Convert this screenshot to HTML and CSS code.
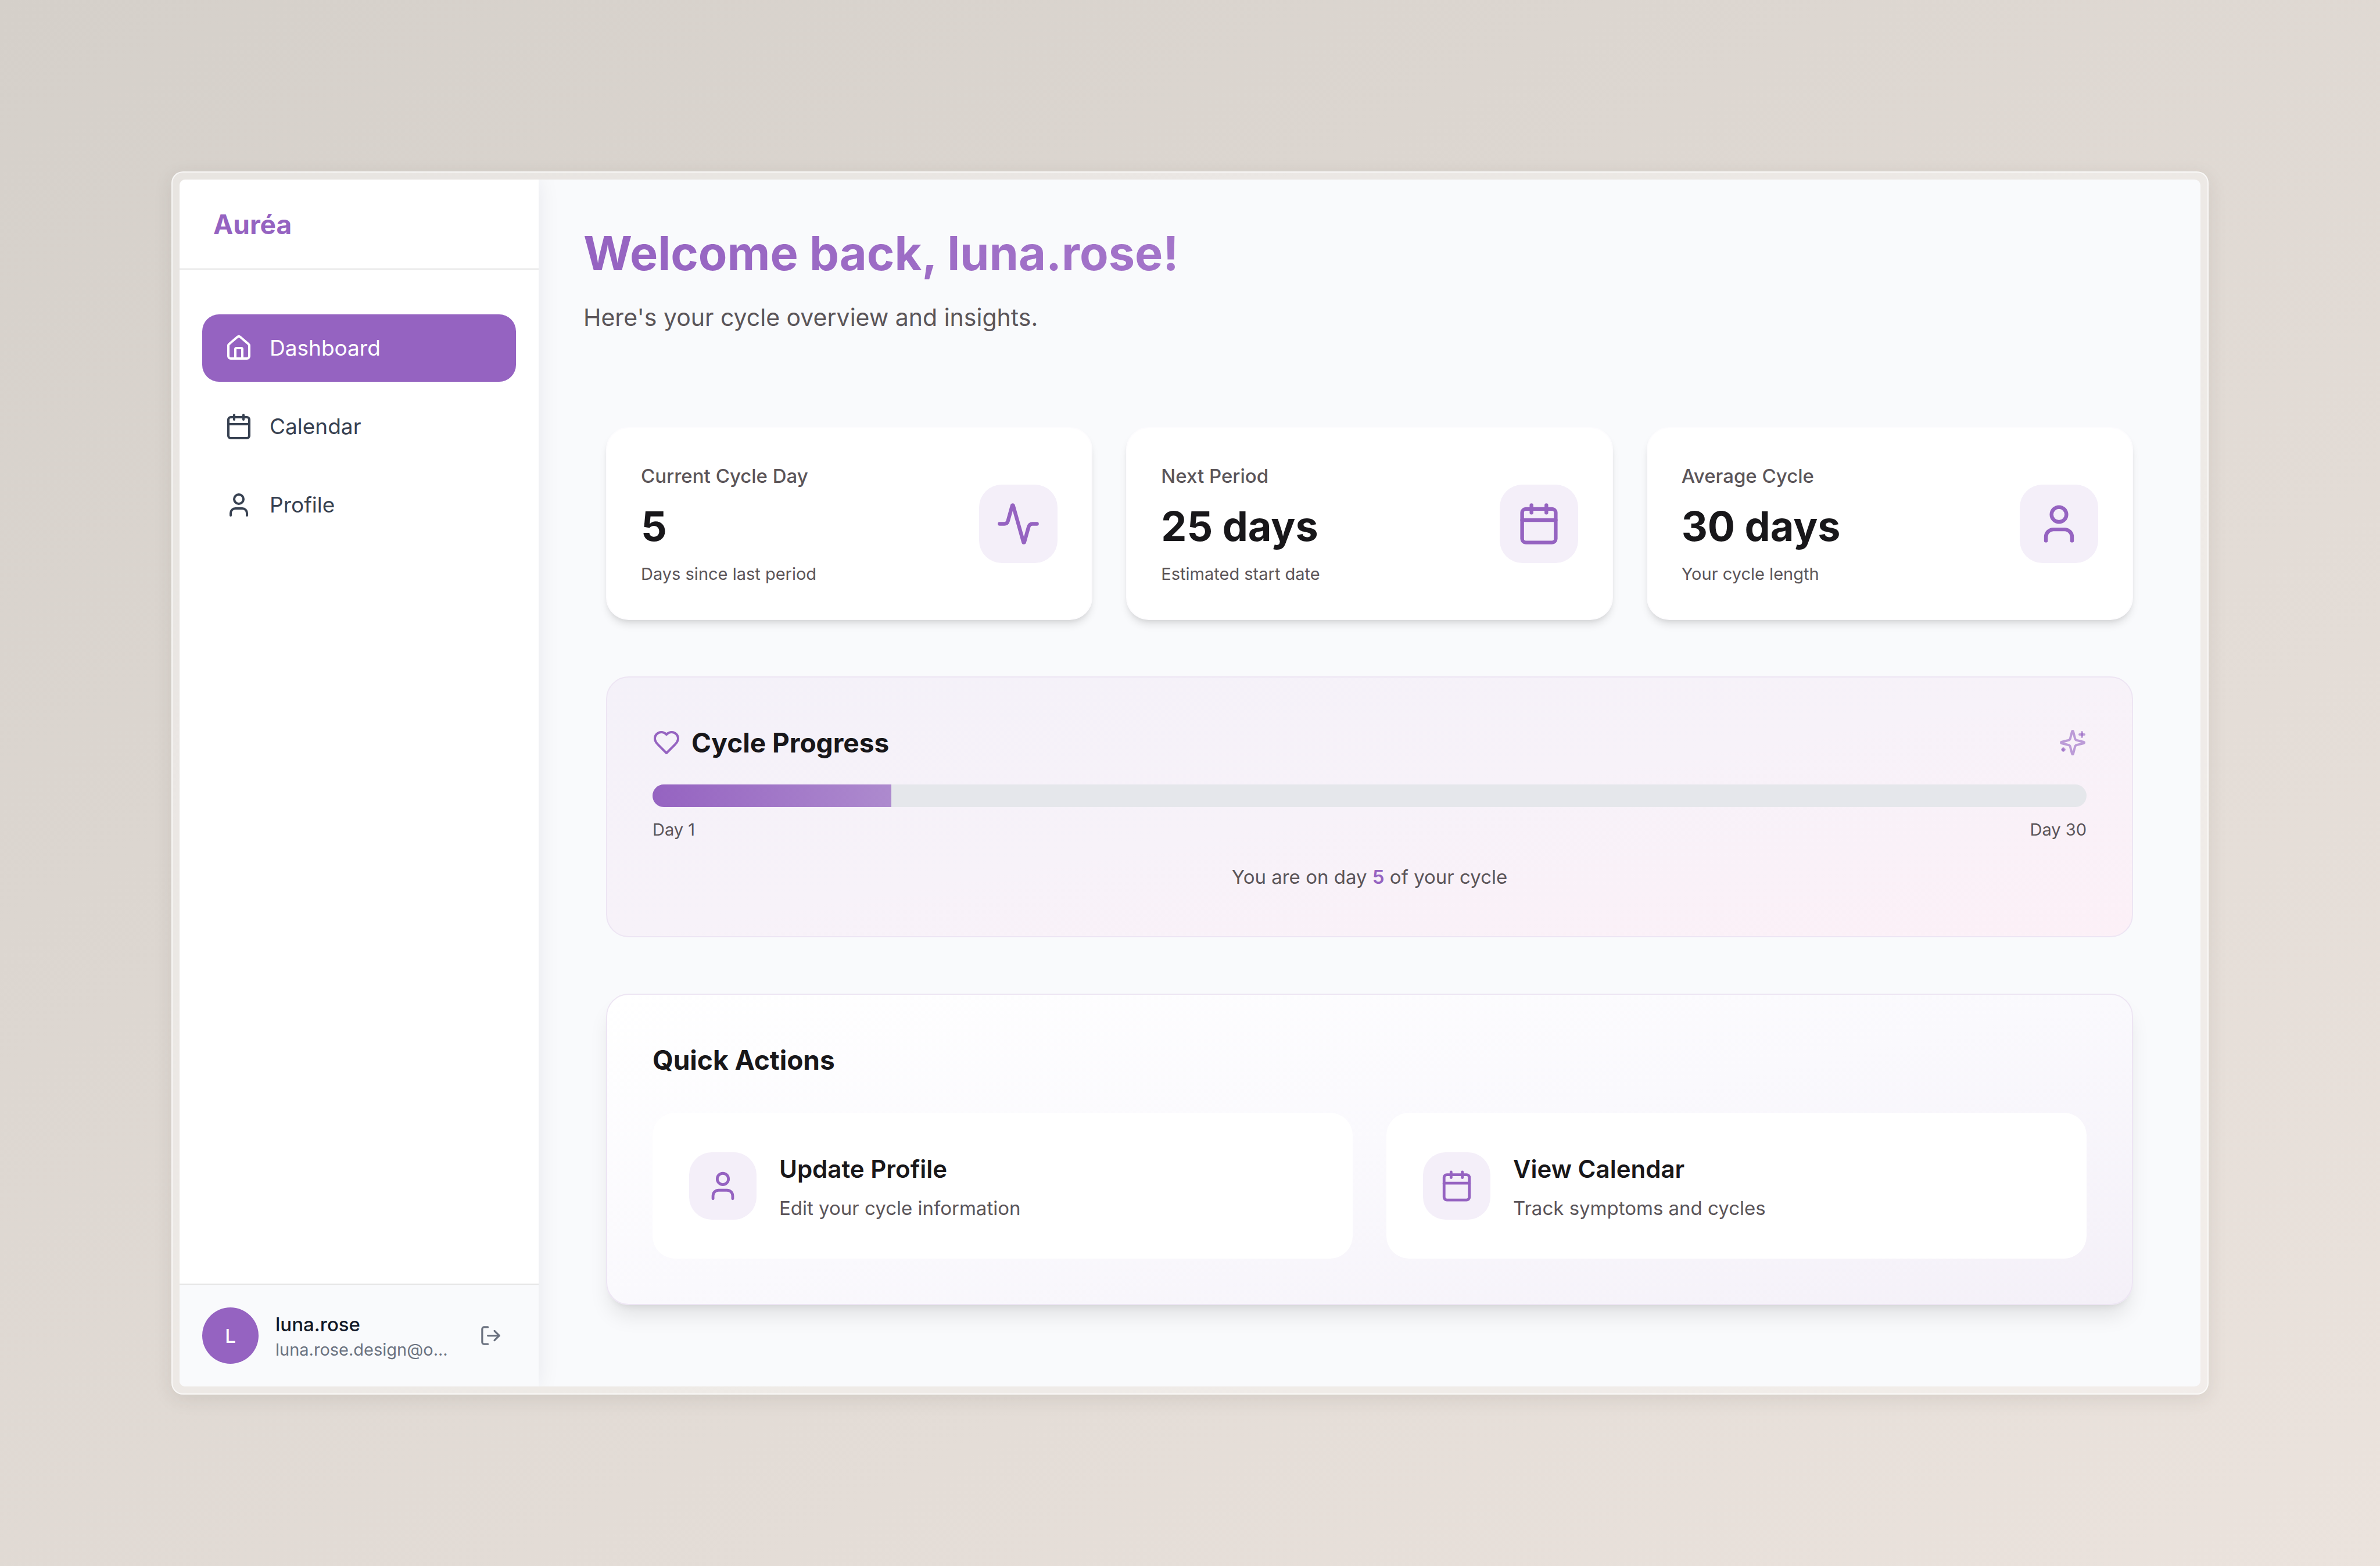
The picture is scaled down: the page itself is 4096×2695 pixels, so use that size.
FILE: index.html
```html
<!DOCTYPE html>
<html lang="en">
<head>
  <meta charset="utf-8">
  <meta name="viewport" content="width=device-width, initial-scale=1">
  <title>Auréa – Dashboard</title>
  <link rel="stylesheet" href="styles.css">
</head>
<body class="page">
  <svg class="sprite" aria-hidden="true">
    <symbol id="icon-home" viewBox="0 0 24 24">
      <path d="M15 21v-8a1 1 0 0 0-1-1h-4a1 1 0 0 0-1 1v8"/>
      <path d="M3 10a2 2 0 0 1 .709-1.528l7-5.999a2 2 0 0 1 2.582 0l7 5.999A2 2 0 0 1 21 10v9a2 2 0 0 1-2 2H5a2 2 0 0 1-2-2z"/>
    </symbol>
    <symbol id="icon-calendar" viewBox="0 0 24 24">
      <path d="M8 2v4"/><path d="M16 2v4"/>
      <rect width="18" height="18" x="3" y="4" rx="2"/>
      <path d="M3 10h18"/>
    </symbol>
    <symbol id="icon-user" viewBox="0 0 24 24">
      <path d="M19 21v-2a4 4 0 0 0-4-4H9a4 4 0 0 0-4 4v2"/>
      <circle cx="12" cy="7" r="4"/>
    </symbol>
    <symbol id="icon-activity" viewBox="0 0 24 24">
      <path d="M22 12h-2.480a2 2 0 0 0-1.930 1.460l-2.350 8.360a.25.25 0 0 1-.480 0L9.240 2.180a.25.25 0 0 0-.480 0l-2.350 8.360A2 2 0 0 1 4.490 12H2"/>
    </symbol>
    <symbol id="icon-heart" viewBox="0 0 24 24">
      <path d="M19 14c1.490-1.460 3-3.210 3-5.500A5.500 5.500 0 0 0 16.500 3c-1.760 0-3 .5-4.500 2-1.500-1.500-2.740-2-4.500-2A5.500 5.500 0 0 0 2 8.500c0 2.300 1.500 4.050 3 5.500l7 7Z"/>
    </symbol>
    <symbol id="icon-sparkles" viewBox="0 0 24 24">
      <path d="M9.937 15.500A2 2 0 0 0 8.500 14.063l-6.135-1.582a.5.5 0 0 1 0-.962L8.500 9.936A2 2 0 0 0 9.937 8.500l1.582-6.135a.5.5 0 0 1 .963 0L14.063 8.500A2 2 0 0 0 15.500 9.937l6.135 1.581a.5.5 0 0 1 0 .964L15.500 14.063a2 2 0 0 0-1.437 1.437l-1.582 6.135a.5.5 0 0 1-.963 0z"/>
      <path d="M20 3v4"/><path d="M22 5h-4"/><path d="M4 17v2"/><path d="M5 18H3"/>
    </symbol>
    <symbol id="icon-logout" viewBox="0 0 24 24">
      <path d="M9 21H5a2 2 0 0 1-2-2V5a2 2 0 0 1 2-2h4"/>
      <path d="m16 17 5-5-5-5"/><path d="M21 12H9"/>
    </symbol>
  </svg>

  <div class="frame">
    <div class="app">
      <aside class="sidebar">
        <div class="brand">Auréa</div>
        <nav class="nav" aria-label="Main">
          <a class="nav-item is-active" href="#dashboard" aria-current="page"><svg class="icon icon-sm"><use href="#icon-home"/></svg>Dashboard</a>
          <a class="nav-item" href="#calendar"><svg class="icon icon-sm"><use href="#icon-calendar"/></svg>Calendar</a>
          <a class="nav-item" href="#profile"><svg class="icon icon-sm"><use href="#icon-user"/></svg>Profile</a>
        </nav>
        <div class="account">
          <div class="avatar">L</div>
          <div class="account-text">
            <div class="account-name">luna.rose</div>
            <div class="account-mail">luna.rose.design@o...</div>
          </div>
          <button class="logout" type="button" aria-label="Log out"><svg class="icon icon-xs"><use href="#icon-logout"/></svg></button>
        </div>
      </aside>

      <main class="main">
        <header class="hero">
          <h1 class="hero-title">Welcome back, luna.rose!</h1>
          <p class="hero-text">Here's your cycle overview and insights.</p>
        </header>

        <div class="content">
          <section class="stats" aria-label="Cycle statistics">
            <article class="stat">
              <div class="stat-text">
                <p class="label">Current Cycle Day</p>
                <p class="stat-value">5</p>
                <p class="note">Days since last period</p>
              </div>
              <div class="tile tile-lg"><svg class="icon icon-lg"><use href="#icon-activity"/></svg></div>
            </article>
            <article class="stat">
              <div class="stat-text">
                <p class="label">Next Period</p>
                <p class="stat-value">25 days</p>
                <p class="note">Estimated start date</p>
              </div>
              <div class="tile tile-lg"><svg class="icon icon-lg"><use href="#icon-calendar"/></svg></div>
            </article>
            <article class="stat">
              <div class="stat-text">
                <p class="label">Average Cycle</p>
                <p class="stat-value">30 days</p>
                <p class="note">Your cycle length</p>
              </div>
              <div class="tile tile-lg"><svg class="icon icon-lg"><use href="#icon-user"/></svg></div>
            </article>
          </section>

          <section class="panel panel-progress">
            <div class="panel-head">
              <svg class="icon icon-sm accent"><use href="#icon-heart"/></svg>
              <h2 class="panel-title">Cycle Progress</h2>
              <svg class="icon icon-sm sparkles"><use href="#icon-sparkles"/></svg>
            </div>
            <div class="track" role="progressbar" aria-label="Cycle progress" aria-valuemin="1" aria-valuemax="30" aria-valuenow="5">
              <div class="fill" style="width: 16.667%"></div>
            </div>
            <div class="range note"><span>Day 1</span><span>Day 30</span></div>
            <p class="progress-text">You are on day <strong class="day">5</strong> of your cycle</p>
          </section>

          <section class="panel panel-actions">
            <h2 class="panel-title">Quick Actions</h2>
            <div class="actions">
              <a class="action" href="#profile">
                <span class="tile tile-md"><svg class="icon icon-md"><use href="#icon-user"/></svg></span>
                <span class="action-text">
                  <span class="action-title">Update Profile</span>
                  <span class="action-note">Edit your cycle information</span>
                </span>
              </a>
              <a class="action" href="#calendar">
                <span class="tile tile-md"><svg class="icon icon-md"><use href="#icon-calendar"/></svg></span>
                <span class="action-text">
                  <span class="action-title">View Calendar</span>
                  <span class="action-note">Track symptoms and cycles</span>
                </span>
              </a>
            </div>
          </section>
        </div>
      </main>
    </div>
  </div>
</body>
</html>
```
FILE: styles.css
```css
:root {
  --purple: #9563c1;
  --tint: #f4eff9;
  --ink: #18171a;
  --muted: #5b5559;
  --surface: #f9fafc;
  --radius: 39px;
}

* { box-sizing: border-box; }

h1, h2, p { margin: 0; }

.page {
  display: flex;
  min-height: 100vh;
  margin: 0;
  padding: 295px;
  background: linear-gradient(150deg, #d5d0ca, #ebe3dd);
  color: var(--ink);
  font-family: Inter, "Liberation Sans", sans-serif;
  font-size: 33px;
  line-height: 48px;
}

.sprite {
  position: absolute;
  width: 0;
  height: 0;
}

.icon {
  flex: none;
  fill: none;
  stroke: currentColor;
  stroke-width: 2;
  stroke-linecap: round;
  stroke-linejoin: round;
}

.icon-xs { width: 39px; height: 39px; }
.icon-sm { width: 48px; height: 48px; }
.icon-md { width: 58px; height: 58px; }
.icon-lg { width: 77px; height: 77px; }

.frame {
  display: flex;
  flex: 1;
  min-width: 0;
  padding: 12px;
  border: 2px solid rgba(255, 255, 255, 0.7);
  border-radius: 20px;
  background: rgba(255, 255, 255, 0.42);
  box-shadow: 0 8px 32px rgba(60, 50, 40, 0.1);
}

.app {
  display: flex;
  flex: 1;
  min-width: 0;
  overflow: hidden;
  border-radius: 10px;
  background: var(--surface);
}

/* Sidebar */

.sidebar {
  display: flex;
  flex: none;
  flex-direction: column;
  width: 618px;
  background: #fff;
  box-shadow: 0 0 36px rgba(20, 30, 50, 0.08);
}

.brand {
  height: 155px;
  padding: 48px 58px;
  border-bottom: 2px solid #e5e5e5;
  color: var(--purple);
  font-size: 46px;
  font-weight: 700;
  line-height: 58px;
}

.nav {
  display: flex;
  flex: 1;
  flex-direction: column;
  gap: 19px;
  padding: 77px 39px;
}

.nav-item {
  display: flex;
  align-items: center;
  gap: 29px;
  height: 116px;
  padding: 0 39px;
  border-radius: 29px;
  color: #374151;
  font-size: 37px;
  text-decoration: none;
}

.nav-item.is-active {
  background: var(--purple);
  color: #fff;
}

.account {
  display: flex;
  align-items: center;
  gap: 29px;
  padding: 39px;
  border-top: 2px solid #e5e5e5;
  background: var(--surface);
}

.avatar {
  display: grid;
  flex: none;
  place-items: center;
  width: 97px;
  height: 97px;
  border-radius: 50%;
  background: var(--purple);
  color: #fff;
  font-weight: 500;
}

.account-text {
  flex: 1;
  min-width: 0;
  white-space: nowrap;
}

.account-name {
  color: #111827;
  font-weight: 500;
}

.account-mail {
  color: #6b7280;
  font-size: 29px;
  line-height: 39px;
}

.logout {
  display: grid;
  flex: none;
  place-items: center;
  width: 87px;
  height: 77px;
  padding: 0;
  border: 0;
  background: none;
  color: #6b7280;
}

/* Main column */

.main {
  flex: 1;
  min-width: 0;
  padding: 77px;
}

.hero { padding-bottom: 155px; }

.hero-title {
  background: linear-gradient(90deg, var(--purple), #bb91d7);
  background-clip: text;
  color: transparent;
  font-size: 81px;
  font-weight: 700;
  line-height: 101px;
}

.hero-text {
  margin-top: 25px;
  color: var(--muted);
  font-size: 41px;
  line-height: 68px;
}

.content {
  display: flex;
  flex-direction: column;
  gap: 97px;
  padding: 0 39px;
}

.stats {
  display: grid;
  grid-template-columns: repeat(3, 1fr);
  gap: 58px;
}

.stat {
  display: flex;
  align-items: center;
  justify-content: space-between;
  padding: 58px;
  border: 2px solid #fdfcfe;
  border-radius: var(--radius);
  background: #fff;
  box-shadow: 0 10px 14px -2px rgba(0, 0, 0, 0.1), 0 5px 10px -5px rgba(0, 0, 0, 0.1);
}

.label {
  color: var(--muted);
  font-weight: 500;
}

.stat-value {
  margin: 19px 0;
  font-size: 70px;
  font-weight: 700;
  line-height: 87px;
}

.note {
  color: var(--muted);
  font-size: 29px;
  line-height: 39px;
}

.tile {
  display: grid;
  flex: none;
  place-items: center;
  border-radius: var(--radius);
  background: var(--tint);
  color: var(--purple);
}

.tile-lg { width: 135px; height: 135px; }
.tile-md { width: 116px; height: 116px; }

.panel {
  padding: 78px;
  border: 2px solid #ede5f3;
  border-radius: var(--radius);
}

.panel-progress { background: linear-gradient(to bottom right, #f4f1f9, #f7f2f9 50%, #fcf0f7); }

.panel-actions {
  background: linear-gradient(to bottom right, #fff, #faf9fd 50%, #f4f0f8);
  box-shadow: 0 24px 36px -7px rgba(0, 0, 0, 0.1), 0 10px 14px -10px rgba(0, 0, 0, 0.1);
}

.panel-head {
  display: flex;
  align-items: center;
  gap: 19px;
  margin-bottom: 38px;
}

.accent { color: var(--purple); }

.sparkles {
  margin-left: auto;
  color: rgba(149, 99, 193, 0.6);
}

.panel-title {
  font-size: 46px;
  font-weight: 700;
  line-height: 68px;
}

.track {
  height: 39px;
  overflow: hidden;
  border-radius: 20px;
  background: #e5e7eb;
}

.fill {
  height: 100%;
  background: linear-gradient(90deg, var(--purple), #ad8ace);
}

.range {
  display: flex;
  justify-content: space-between;
  margin: 19px 0 38px;
}

.progress-text {
  color: var(--muted);
  text-align: center;
}

.day {
  color: var(--purple);
  font-weight: 600;
}

.actions {
  display: grid;
  grid-template-columns: repeat(2, 1fr);
  gap: 58px;
  margin-top: 57px;
}

.action {
  display: flex;
  align-items: center;
  gap: 39px;
  padding: 63px;
  border-radius: var(--radius);
  background: #fff;
  color: inherit;
  text-decoration: none;
}

.action-text {
  display: flex;
  flex-direction: column;
  gap: 9px;
}

.action-title {
  font-size: 42px;
  font-weight: 600;
  line-height: 68px;
}

.action-note { color: var(--muted); }
```
